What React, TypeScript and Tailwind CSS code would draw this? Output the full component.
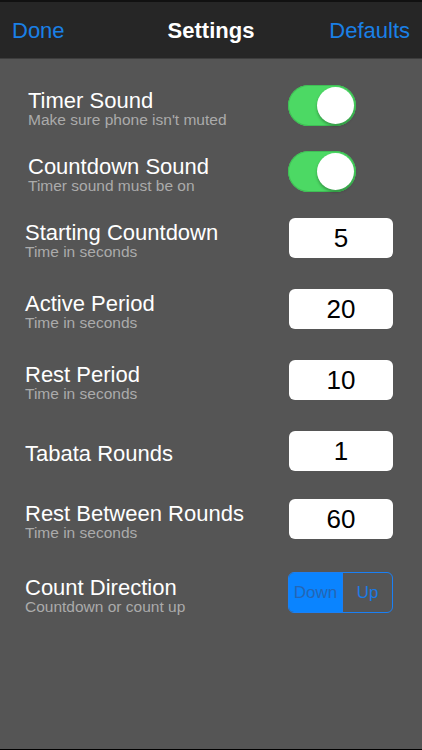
import { ReactNode } from "react";

const FONT = { fontFamily: '"Liberation Sans", Arial, Helvetica, sans-serif' };

const Toggle = () => (
  <div className="relative h-[41px] w-[68px] rounded-full bg-[#4cd964] shadow-[inset_0_0_0_1px_#3fbf55]">
    <div className="absolute right-[2px] top-[2px] size-[37px] rounded-full bg-white shadow-[0_2px_3px_rgba(0,0,0,0.3)]" />
  </div>
);

const ValueBox = ({ value }: { value: string }) => (
  <div className="ml-auto flex h-[40px] w-[104px] items-center justify-center rounded-[6px] bg-white text-[26px] text-black">
    {value}
  </div>
);

const Segmented = () => (
  <div className="flex h-[41px] w-[105px] overflow-hidden rounded-[6px] border-[1.5px] border-[#1a80f5] text-[17px]">
    <div className="flex w-[53px] items-center justify-center bg-[#0a84ff] text-[#2366b5]">
      Down
    </div>
    <div className="flex flex-1 items-center justify-center border-l-[1.5px] border-[#1a80f5] text-[#1a7ae6]">
      Up
    </div>
  </div>
);

const Row = ({
  title,
  subtitle,
  control,
  indent,
  top,
  height = "h-[40px]",
}: {
  title: string;
  subtitle?: string;
  control: ReactNode;
  indent: string;
  top: string;
  height?: string;
}) => (
  <div
    className={`flex shrink-0 items-center justify-between pr-[29px] ${height} ${top}`}
  >
    <div className={`flex flex-col pt-[5px] ${indent}`}>
      <span className="text-[22px] leading-[23px] text-white">{title}</span>
      {subtitle && (
        <span className="text-[15.5px] leading-[16px] text-[#ababab]">
          {subtitle}
        </span>
      )}
    </div>
    <div className="flex w-[105px]">{control}</div>
  </div>
);

export default function App() {
  return (
    <div
      className="flex h-[750px] w-[422px] flex-col overflow-hidden border-b border-black bg-[#555555]"
      style={FONT}
    >
      <header className="grid h-[59px] shrink-0 grid-cols-[1fr_auto_1fr] items-center border-t-2 border-b border-t-[#111] border-b-[#3d3d3d] bg-[#262626] px-[12px] text-[22px]">
        <span className="text-[#1a80e6]">Done</span>
        <span className="font-bold text-white">Settings</span>
        <span className="text-right text-[#1a80e6]">Defaults</span>
      </header>

      <Row
        top="mt-[26px]"
        height="h-[41px]"
        indent="pl-[28px]"
        title="Timer Sound"
        subtitle="Make sure phone isn't muted"
        control={<Toggle />}
      />
      <Row
        top="mt-[25px]"
        height="h-[41px]"
        indent="pl-[28px]"
        title="Countdown Sound"
        subtitle="Timer sound must be on"
        control={<Toggle />}
      />
      <Row
        top="mt-[26px]"
        indent="pl-[25px]"
        title="Starting Countdown"
        subtitle="Time in seconds"
        control={<ValueBox value="5" />}
      />
      <Row
        top="mt-[31px]"
        indent="pl-[25px]"
        title="Active Period"
        subtitle="Time in seconds"
        control={<ValueBox value="20" />}
      />
      <Row
        top="mt-[31px]"
        indent="pl-[25px]"
        title="Rest Period"
        subtitle="Time in seconds"
        control={<ValueBox value="10" />}
      />
      <Row
        top="mt-[31px]"
        indent="pl-[25px]"
        title="Tabata Rounds"
        control={<ValueBox value="1" />}
      />
      <Row
        top="mt-[28px]"
        indent="pl-[25px]"
        title="Rest Between Rounds"
        subtitle="Time in seconds"
        control={<ValueBox value="60" />}
      />
      <Row
        top="mt-[33px]"
        height="h-[41px]"
        indent="pl-[25px]"
        title="Count Direction"
        subtitle="Countdown or count up"
        control={<Segmented />}
      />
    </div>
  );
}
